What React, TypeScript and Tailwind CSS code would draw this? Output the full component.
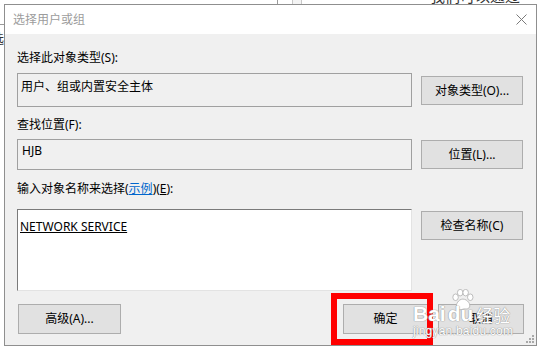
import React from "react";

const font = "font-['Noto_Sans','Noto_Sans_CJK_SC',sans-serif]";

const Btn = ({ label, className = "" }: { label: React.ReactNode; className?: string }) => (
  <div
    className={`flex items-center justify-center border border-[#adadad] bg-[#e1e1e1] text-[12px] text-black ${className}`}
  >
    {label}
  </div>
);

const Grip = () => (
  <svg width="10" height="10" viewBox="0 0 10 10" className="absolute right-[2px] bottom-[2px]">
    {[
      [8, 2],
      [5, 5],
      [8, 5],
      [2, 8],
      [5, 8],
      [8, 8],
    ].map(([x, y], i) => (
      <rect key={i} x={x} y={y} width="2" height="2" fill="#a8a8a8" />
    ))}
  </svg>
);

const Watermark = () => (
  <div className="pointer-events-none absolute left-[413px] top-[289px] w-max whitespace-nowrap text-white [text-shadow:0_0_1px_#8f8f8f,0_0_1px_#8f8f8f]">
    <svg width="28" height="22" viewBox="0 0 26 24" className="ml-[35px] block">
      <g fill="#fff" stroke="#b0b0b0" strokeWidth="0.9">
        <ellipse cx="6" cy="9" rx="3" ry="3.6" />
        <ellipse cx="11" cy="4" rx="3" ry="3.6" />
        <ellipse cx="17" cy="4" rx="3" ry="3.6" />
        <ellipse cx="22" cy="9" rx="3" ry="3.6" />
        <path d="M14 11c-5 0-8 6-7 9s4 3 7 2 5 1 7-2-2-9-7-9z" />
      </g>
    </svg>
    <div className="-mt-[8px] flex items-end font-['Liberation_Sans',sans-serif] text-[21px] font-bold leading-[22px]">
      <span>Bai</span>
      <span className="ml-[2px]">du</span>
      <span className="ml-[3px] font-['Noto_Sans_CJK_SC',sans-serif] text-[17px] font-normal leading-[21px]">
        经验
      </span>
    </div>
    <div className="mt-[-1px] font-['Liberation_Sans',sans-serif] text-[12px] leading-[14px] tracking-[0.2px]">
      jingyan.baidu.com
    </div>
  </div>
);

export default function App() {
  return (
    <div className={`relative h-[350px] w-[540px] overflow-hidden bg-white ${font}`}>
      {/* bits of the page behind the dialog */}
      <div className="absolute left-0 top-[24px] h-px w-[4px] bg-[#9a9a9a]" />
      <div className="absolute left-[277px] top-0 h-[4px] w-px bg-[#9a9a9a]" />
      <div className="absolute left-[292px] top-0 h-[4px] w-[10px] border-x border-[#c8c8c8] bg-[#f4f4f4]" />
      <div className="absolute left-[430px] top-[-12px] text-[15px] leading-[16px] text-[#333]">
        我们可以通过
      </div>
      <div className="absolute left-[-9px] top-[30px] text-[13px] leading-[16px] text-[#333]">选</div>

      <div className="absolute left-[4px] top-[4px] flex h-[342px] w-[533px] flex-col border border-[#8f8f8f] bg-[#f0f0f0]">
        <div className="flex h-[29px] shrink-0 items-center justify-between bg-white pl-[8px] pr-[9px]">
          <span className="text-[12px] text-[#9c9c9c]">选择用户或组</span>
          <svg width="11" height="11" viewBox="0 0 11 11">
            <path d="M0.5 0.5L10.5 10.5M10.5 0.5L0.5 10.5" stroke="#7a7a7a" strokeWidth="1" />
          </svg>
        </div>

        <div className="flex flex-col pl-[12px] pr-[12px] text-[12px] leading-[16px] text-black">
          <div className="mt-[16px]">选择此对象类型(S):</div>
          <div className="mt-[7px] flex items-start">
            <div className="h-[34px] w-[395px] border border-[#a0a0a0] bg-[#f0f0f0] pl-[3px] pt-[5px]">
              用户、组或内置安全主体
            </div>
            <Btn label="对象类型(O)..." className="ml-[9px] mt-[3px] h-[29px] w-[102px]" />
          </div>

          <div className="mt-[10px]">查找位置(F):</div>
          <div className="mt-[6px] flex items-start">
            <div className="h-[31px] w-[395px] border border-[#a0a0a0] bg-[#f0f0f0] pl-[4px] pt-[3px]">
              HJB
            </div>
            <Btn label="位置(L)..." className="ml-[9px] mt-px h-[29px] w-[102px]" />
          </div>

          <div className="mt-[11px]">
            输入对象名称来选择(<span className="text-[#0066cc] underline">示例</span>)(
            <span className="underline">E</span>):
          </div>
          <div className="mt-[12px] flex items-start">
            <div className="h-[82px] w-[395px] border border-b-[#e3e3e3] border-l-[#7a7a7a] border-r-[#e3e3e3] border-t-[#7a7a7a] bg-white pl-[2px] pt-[9px]">
              <span className="underline">NETWORK SERVICE</span>
            </div>
            <Btn label="检查名称(C)" className="ml-[9px] mt-[2px] h-[29px] w-[102px]" />
          </div>

          <div className="mt-[13px] flex items-start">
            <Btn label="高级(A)..." className="ml-px h-[30px] w-[103px]" />
            <div className="flex-1" />
            <Btn label="确定" className="h-[30px] w-[85px]" />
            <Btn label="取消" className="ml-[10px] h-[30px] w-[86px]" />
          </div>
        </div>
        <Grip />
      </div>

      {/* highlight box */}
      <div className="absolute left-[331px] top-[293px] h-[52px] w-[102px] border-[6px] border-[#ff0000]" />
      <Watermark />
    </div>
  );
}
